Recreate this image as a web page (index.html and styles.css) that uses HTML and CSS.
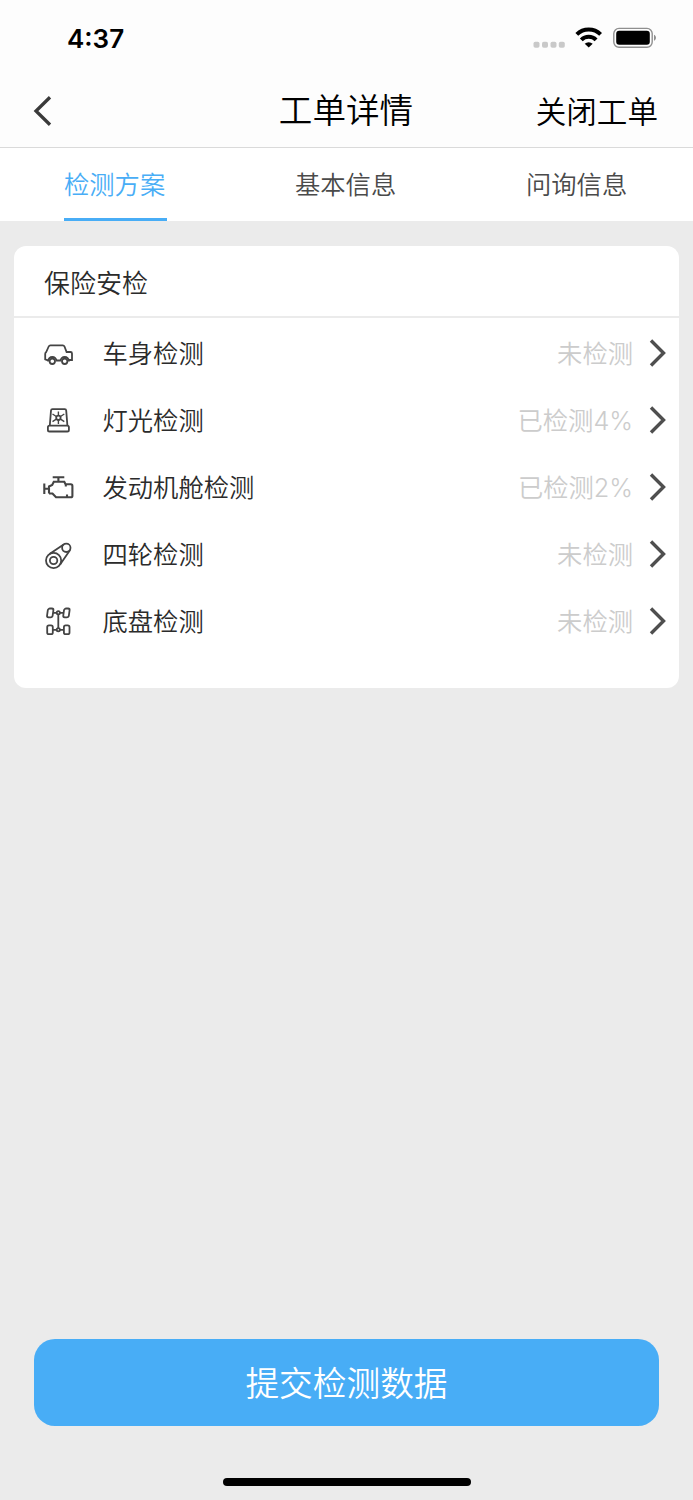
FILE: index.html
```
<!DOCTYPE html>
<html lang="zh-CN">
<head>
  <meta charset="UTF-8">
  <title>工单详情</title>
  <meta name="viewport" content="width=device-width, initial-scale=1.0">
  <link rel="stylesheet" href="styles.css">
</head>
<body>
  <header>
    <div class="status">
      <span class="time">4:37</span>
      <svg class="status-icons" width="126" height="24" viewBox="0 0 126 24">
        <g fill="#c9c9c9">
          <rect x="3.5" y="15.7" width="6" height="6" rx="1.8"/>
          <rect x="12" y="15.7" width="6" height="6" rx="1.8"/>
          <rect x="20.5" y="15.7" width="6" height="6" rx="1.8"/>
          <rect x="28.8" y="15.7" width="6" height="6" rx="1.8"/>
        </g>
        <g fill="none" stroke="#000" stroke-width="4">
          <path d="M46.8 8.4a17 17 0 0 1 23.8 0"/>
          <path d="M51.3 13.8a10.4 10.4 0 0 1 14.8 0"/>
        </g>
        <path d="M58.7 21.5l-4-3.7a5.8 5.8 0 0 1 8 0z"/>
        <rect x="83.8" y="2.4" width="38.4" height="18.8" rx="5.2" fill="none" stroke="#8f8f8f" stroke-width="1.4"/>
        <rect x="86.2" y="4.8" width="33.6" height="14" rx="3"/>
        <path d="M124 8.8c2.6 1 2.6 5 0 6z" fill="#8f8f8f"/>
      </svg>
    </div>
    <div class="nav">
      <svg class="back" width="20" height="32" viewBox="0 0 20 32"><path d="M17 2.3L3 16l14 13.7"/></svg>
      <h1>工单详情</h1>
      <span class="close">关闭工单</span>
    </div>
  </header>

  <nav class="tabs">
    <a class="active">检测方案</a>
    <a>基本信息</a>
    <a>问询信息</a>
  </nav>

  <main>
    <section class="card">
      <h2>保险安检</h2>
      <ul>
        <li>
          <svg class="icon" viewBox="0 0 32 32">
            <path d="M6 22.5L3.2 21.300v-5.300Q3.200 14.800 4.200 14L6.700 8.500Q7.200 7.400 8.400 7.400h12.400q1.200 0 1.700 1.100l2.100 5.500h3.900q1.500 0 1.500 1.500v6.500h-3M14.500 22.500h4M6 23.500c0-6 8.600-6 8.600 0M18.400 23.500c0-6 8.600-6 8.600 0"/>
            <circle cx="10.3" cy="23.3" r="2.7"/><circle cx="22.7" cy="23.3" r="2.7"/>
          </svg>
          <span class="name">车身检测</span><span class="state">未检测</span>
          <svg class="arrow" viewBox="0 0 18 30"><path d="M2 2.5L14.5 15 2 27.5"/></svg>
        </li>
        <li>
          <svg class="icon" viewBox="0 0 32 32">
            <path d="M7.800 20.500L9 5.500q.1-1.400 1.500-1.400h12.200q1.400 0 1.500 1.400l1.200 15"/>
            <rect x="5.9" y="20.7" width="21" height="5.8" rx="1.6"/>
            <circle cx="16.4" cy="12.8" r="2.2"/>
            <path class="thin" d="M16.4 6.500v4M16.400 15.100v4M10.500 9l3.800 2.500M18.500 14.200l3.800 2.500M22.300 9l-3.800 2.500M14.300 14.200l-3.800 2.500"/>
          </svg>
          <span class="name">灯光检测</span><span class="state">已检测4%</span>
          <svg class="arrow" viewBox="0 0 18 30"><path d="M2 2.5L14.5 15 2 27.5"/></svg>
        </li>
        <li>
          <svg class="icon engine" viewBox="0 0 32 32">
            <path d="M2.3 11.5V22M2.300 16.800h4.500M7 21.500v-7l3.200-1.500 1.600-3.300h10.500l1.500 3v1.800M23.800 12.300h5q1.600 0 1.600 1.600v9.800q0 1.600-1.600 1.600H14l-3.500-3.800H7M25 25v-2.500M16.400 5.300v4.400M10.700 5.300h11.600"/>
          </svg>
          <span class="name">发动机舱检测</span><span class="state">已检测2%</span>
          <svg class="arrow" viewBox="0 0 18 30"><path d="M2 2.5L14.5 15 2 27.5"/></svg>
        </li>
        <li>
          <svg class="icon" viewBox="0 0 32 32">
            <circle cx="11.6" cy="21.5" r="7.6"/><circle cx="11.6" cy="21.5" r="3.7"/>
            <circle cx="24.3" cy="8.8" r="4.2"/>
            <path d="M7.5 15L22 5.200M18.300 25.300l9.800-14.200"/>
          </svg>
          <span class="name">四轮检测</span><span class="state">未检测</span>
          <svg class="arrow" viewBox="0 0 18 30"><path d="M2 2.5L14.5 15 2 27.5"/></svg>
        </li>
        <li>
          <svg class="icon" viewBox="0 0 32 32">
            <rect x="5.4" y="2.5" width="5.6" height="8.8" rx="1.8" transform="skewX(-8) translate(1 0)"/>
            <rect x="21.6" y="2.5" width="5.6" height="8.8" rx="1.8" transform="skewX(-8) translate(1 0)"/>
            <rect x="5.2" y="19.4" width="5.6" height="8.8" rx="1.8"/>
            <rect x="21.9" y="19.4" width="5.6" height="8.8" rx="1.8"/>
            <circle cx="16.3" cy="6.8" r="1.6"/><circle cx="16.3" cy="23.8" r="1.6"/>
            <path d="M11 6.8h3.700M17.900 6.800h3.900M10.800 23.800h3.900M17.900 23.800h4M16.300 8.400v13.800"/>
          </svg>
          <span class="name">底盘检测</span><span class="state">未检测</span>
          <svg class="arrow" viewBox="0 0 18 30"><path d="M2 2.5L14.5 15 2 27.5"/></svg>
        </li>
      </ul>
    </section>
  </main>

  <footer>
    <button>提交检测数据</button>
    <div class="home-bar"></div>
  </footer>
</body>
</html>
```
FILE: styles.css
```
* { box-sizing: border-box; margin: 0; padding: 0; }
body {
  display: flex;
  flex-direction: column;
  height: 1500px;
  background: #ebebeb;
  color: #2b2b2b;
  font-family: "Noto Sans CJK SC", sans-serif;
  font-weight: 350;
}
svg { display: block; flex: none; }

header { height: 148px; background: #fdfdfd; border-bottom: 1px solid #dadada; }
.status { display: flex; justify-content: space-between; height: 72px; padding: 26px 37px 0 67px; }
.time { font: 600 26px/26px Inter, sans-serif; color: #000; }
.nav { display: grid; grid-template-columns: 1fr auto 1fr; align-items: center; height: 75px; padding: 0 35px 0 33px; color: #000; }
.back { fill: none; stroke: #3a3a3a; stroke-width: 3.3; margin-top: 3px; }
h1 { font-size: 33.6px; font-weight: 350; line-height: 48px; margin: -2px 0 0 1px; }
.close { justify-self: end; font-size: 30.6px; }

.tabs { display: grid; grid-template-columns: repeat(3, 1fr); justify-items: center; height: 73px; background: #fff; }
.tabs a { width: 103px; font-size: 25.3px; line-height: 70px; white-space: nowrap; color: #4a4a4a; border-bottom: 3px solid transparent; }
.tabs .active { color: #48adf6; border-color: #48adf6; }

main { flex: 1; padding: 25px 14px; }
.card { height: 442px; background: #fff; border-radius: 12px; }
h2 { height: 72px; padding-left: 30px; font-size: 26px; font-weight: 350; line-height: 72px; border-bottom: 2px solid #ebebeb; }
li { display: flex; align-items: center; height: 67px; padding: 2px 12px 0 28px; list-style: none; font-size: 25.3px; line-height: 36px; }
.icon { width: 32px; height: 32px; margin: 2px 28px 0 0; fill: none; stroke: #444; stroke-width: 1.8; }
.icon .thin { stroke-width: 1.4; }
.engine { stroke-width: 2.1; }
.name { flex: 1; margin-top: -2px; padding-left: 0.5px; }
.state { margin-top: 2px; color: #ccc; font-family: Inter, "Noto Sans CJK SC", sans-serif; }
.arrow { width: 18px; height: 30px; margin-left: 16px; fill: none; stroke: #4f4f4f; stroke-width: 3.4; }

footer { height: 161px; padding: 0 34px; }
button { display: block; width: 100%; height: 87px; padding-bottom: 3px; border: 0; border-radius: 21px; background: #48adf6; color: #fff; font: inherit; font-size: 33.7px; }
.home-bar { width: 248px; height: 8px; margin: 52px auto 0; border-radius: 4px; background: #000; }
```
